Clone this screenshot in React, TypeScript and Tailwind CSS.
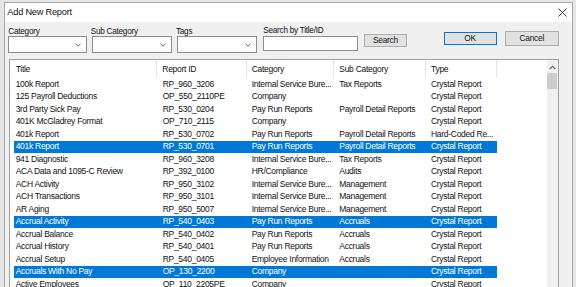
import React from "react";

type Row = { t: string; id: string; c: string; s: string; ty: string; sel?: boolean };

const rows: Row[] = [
  { t: "100k Report", id: "RP_960_3206", c: "Internal Service Bure...", s: "Tax Reports", ty: "Crystal Report" },
  { t: "125 Payroll Deductions", id: "OP_550_2110PE", c: "Company", s: "", ty: "Crystal Report" },
  { t: "3rd Party Sick Pay", id: "RP_530_0204", c: "Pay Run Reports", s: "Payroll Detail Reports", ty: "Crystal Report" },
  { t: "401K McGladrey Format", id: "OP_710_2115", c: "Company", s: "", ty: "Crystal Report" },
  { t: "401k Report", id: "RP_530_0702", c: "Pay Run Reports", s: "Payroll Detail Reports", ty: "Hard-Coded Re..." },
  { t: "401k Report", id: "RP_530_0701", c: "Pay Run Reports", s: "Payroll Detail Reports", ty: "Crystal Report", sel: true },
  { t: "941 Diagnostic", id: "RP_960_3208", c: "Internal Service Bure...", s: "Tax Reports", ty: "Crystal Report" },
  { t: "ACA Data and 1095-C Review", id: "RP_392_0100", c: "HR/Compliance", s: "Audits", ty: "Crystal Report" },
  { t: "ACH Activity", id: "RP_950_3102", c: "Internal Service Bure...", s: "Management", ty: "Crystal Report" },
  { t: "ACH Transactions", id: "RP_950_3101", c: "Internal Service Bure...", s: "Management", ty: "Crystal Report" },
  { t: "AR Aging", id: "RP_950_5007", c: "Internal Service Bure...", s: "Management", ty: "Crystal Report" },
  { t: "Accrual Activity", id: "RP_540_0403", c: "Pay Run Reports", s: "Accruals", ty: "Crystal Report", sel: true },
  { t: "Accrual Balance", id: "RP_540_0402", c: "Pay Run Reports", s: "Accruals", ty: "Crystal Report" },
  { t: "Accrual History", id: "RP_540_0401", c: "Pay Run Reports", s: "Accruals", ty: "Crystal Report" },
  { t: "Accrual Setup", id: "RP_540_0405", c: "Employee Information", s: "Accruals", ty: "Crystal Report" },
  { t: "Accruals With No Pay", id: "OP_130_2200", c: "Company", s: "", ty: "Crystal Report", sel: true },
  { t: "Active Employees", id: "OP_110_2205PE", c: "Company", s: "", ty: "Crystal Report" },
];

function Chevron() {
  return (
    <svg width="6" height="4" viewBox="0 0 6 4" className="shrink-0">
      <path d="M0.5 0.8 L3 3.2 L5.5 0.8" fill="none" stroke="#555" strokeWidth="0.9" />
    </svg>
  );
}

function Combo({ w }: { w: string }) {
  return (
    <div className={`h-[17px] ${w} bg-white border border-[#8c8c8c] flex items-center justify-end pr-[5px]`}>
      <Chevron />
    </div>
  );
}

export default function App() {
  return (
    <div className="w-[576px] h-[287px] overflow-hidden bg-[#e6e6e6] font-['Liberation_Sans',Arial,sans-serif] text-[#111]">
      <div className="ml-[4px] mt-[2px] w-[569px] h-[290px] border-x border-t border-[#a8a8a8] bg-[#f0f0f0] flex flex-col">
        {/* Title bar */}
        <div className="h-[19px] bg-white flex items-start justify-between pl-[2.3px] pr-[5px] shrink-0">
          <span className="text-[9.2px] leading-[9px] mt-[5px] tracking-[-0.2px]">Add New Report</span>
          <svg width="9" height="9" viewBox="0 0 9 9" className="mt-[5px]">
            <path d="M0.5 0.5 L8.5 8.5 M8.5 0.5 L0.5 8.5" stroke="#222" strokeWidth="0.9" />
          </svg>
        </div>
        {/* Body */}
        <div className="flex flex-col pl-[3.3px] text-[8.2px] tracking-[-0.25px]">
          {/* toolbar */}
          <div className="flex items-start h-[37px] shrink-0">
            <div className="flex flex-col">
              <span className="leading-[9px] mt-[5px]">Category</span>
              <Combo w="w-[79px]" />
            </div>
            <div className="flex flex-col ml-[3.4px]">
              <span className="leading-[9px] mt-[5px]">Sub Category</span>
              <div className="ml-[1.6px]">
                <Combo w="w-[79.4px]" />
              </div>
            </div>
            <div className="flex flex-col ml-[4.3px]">
              <span className="leading-[9px] mt-[5px]">Tags</span>
              <div className="ml-[1.3px]">
                <Combo w="w-[79.4px]" />
              </div>
            </div>
            <div className="flex flex-col ml-[6.6px]">
              <span className="leading-[8.7px] mt-[5px]">Search by Title/ID</span>
              <div className="h-[15px] w-[94.4px] bg-white border border-[#8c8c8c]" />
            </div>
            <div className="ml-[6.6px] mt-[12px] h-[13.3px] w-[42.4px] bg-[#e1e1e1] border border-[#adadad] flex items-center justify-center text-[8.4px]">
              Search
            </div>
            <div className="ml-[37px] mt-[9.7px] h-[13.6px] w-[53px] bg-[#e1e1e1] border border-[#0078d7] flex items-center justify-center text-[8.4px]">
              OK
            </div>
            <div className="ml-[8.3px] mt-[9.3px] h-[14.4px] w-[53.7px] bg-[#e1e1e1] border border-[#adadad] flex items-center justify-center text-[8.4px]">
              Cancel
            </div>
          </div>
          {/* list */}
          <div className="ml-[1px] w-[549.7px] h-[240px] border border-[#a0a0a0] bg-white flex text-[8.5px] tracking-[-0.28px]">
            <div className="flex-1 flex flex-col overflow-hidden">
              {/* header */}
              <div className="h-[18px] flex shrink-0">
                <div className="w-[147px] border-r border-[#e5e5e5] pl-[5.4px] flex items-center">Title</div>
                <div className="w-[89.4px] border-r border-[#e5e5e5] pl-[5px] flex items-center">Report ID</div>
                <div className="w-[87.6px] border-r border-[#e5e5e5] pl-[5px] flex items-center">Category</div>
                <div className="w-[91.7px] border-r border-[#e5e5e5] pl-[5px] flex items-center">Sub Category</div>
                <div className="w-[70.7px] border-r border-[#e5e5e5] pl-[5px] flex items-center">Type</div>
              </div>
              {rows.map((r, i) => (
                <div key={i} className="h-[12.5px] flex shrink-0">
                  <div
                    className={`ml-[3.7px] flex h-full whitespace-nowrap ${
                      r.sel ? "bg-[#0078d7] text-white" : ""
                    }`}
                  >
                    <div className="w-[143.3px] pl-[1.7px] flex items-center overflow-hidden">{r.t}</div>
                    <div className="w-[89.4px] pl-[5.4px] flex items-center overflow-hidden">{r.id}</div>
                    <div className="w-[87.6px] pl-[5px] flex items-center overflow-hidden">{r.c}</div>
                    <div className="w-[91.7px] pl-[5px] flex items-center overflow-hidden">{r.s}</div>
                    <div className="w-[70.7px] pl-[5px] flex items-center overflow-hidden">{r.ty}</div>
                  </div>
                </div>
              ))}
            </div>
            {/* scrollbar */}
            <div className="w-[11.3px] bg-[#f0f0f0] flex flex-col items-center shrink-0">
              <svg width="7" height="5" viewBox="0 0 7 5" className="mt-[5px]">
                <path d="M0.8 4 L3.5 1.2 L6.2 4" fill="none" stroke="#606060" strokeWidth="1.1" />
              </svg>
              <div className="mt-[2.5px] w-[10px] h-[16.6px] bg-[#cdcdcd]" />
            </div>
          </div>
        </div>
      </div>
    </div>
  );
}
